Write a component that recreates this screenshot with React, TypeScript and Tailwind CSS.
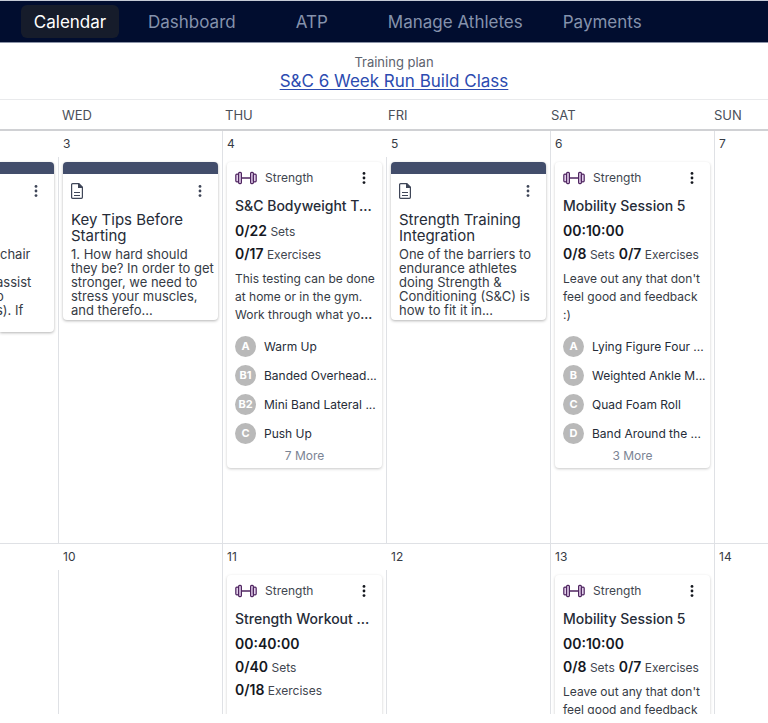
import type { ReactNode } from 'react'

type Exercise = { tag: string; name: string }

type Workout = {
  kind: 'workout'
  title: string
  stats: { value: string; label?: string }[][]
  description?: string
  cut?: boolean
  exercises?: Exercise[]
  more?: string
}

type Note = { kind: 'note'; title: string; body: string[] }

type Day = { date: string; openHead?: boolean; item?: Workout | Note }

const nav = [
  { label: 'Calendar', style: 'ml-[21px] w-[98px] rounded-md bg-[#161c2b] text-white' },
  { label: 'Dashboard', style: 'ml-[29px] text-[#8592ac]' },
  { label: 'ATP', style: 'ml-[60px] text-[#8592ac]' },
  { label: 'Manage Athletes', style: 'ml-[60px] text-[#8592ac]' },
  { label: 'Payments', style: 'ml-10 text-[#8592ac]' },
]

const weekdays = ['', 'WED', 'THU', 'FRI', 'SAT', 'SUN']

const mobility: Workout = {
  kind: 'workout',
  title: 'Mobility Session 5',
  stats: [
    [{ value: '00:10:00' }],
    [
      { value: '0/8', label: 'Sets' },
      { value: '0/7', label: 'Exercises' },
    ],
  ],
  description: "Leave out any that don't feel good and feedback :)",
  exercises: [
    { tag: 'A', name: 'Lying Figure Four ...' },
    { tag: 'B', name: 'Weighted Ankle M...' },
    { tag: 'C', name: 'Quad Foam Roll' },
    { tag: 'D', name: 'Band Around the ...' },
  ],
  more: '3 More',
}

const firstWeek: Day[] = [
  {
    date: '3',
    openHead: true,
    item: {
      kind: 'note',
      title: 'Key Tips Before Starting',
      body: ['1. How hard should', 'they be? In order to get', 'stronger, we need to', 'stress your muscles,', 'and therefo...'],
    },
  },
  {
    date: '4',
    item: {
      kind: 'workout',
      title: 'S&C Bodyweight T...',
      stats: [[{ value: '0/22', label: 'Sets' }], [{ value: '0/17', label: 'Exercises' }]],
      description: 'This testing can be done at home or in the gym. Work through what yo',
      cut: true,
      exercises: [
        { tag: 'A', name: 'Warm Up' },
        { tag: 'B1', name: 'Banded Overhead...' },
        { tag: 'B2', name: 'Mini Band Lateral ...' },
        { tag: 'C', name: 'Push Up' },
      ],
      more: '7 More',
    },
  },
  {
    date: '5',
    openHead: true,
    item: {
      kind: 'note',
      title: 'Strength Training Integration',
      body: ['One of the barriers to', 'endurance athletes', 'doing Strength &', 'Conditioning (S&C) is', 'how to fit it in...'],
    },
  },
  { date: '6', item: mobility },
  { date: '7' },
]

const secondWeek: Day[] = [
  { date: '10', openHead: true },
  {
    date: '11',
    item: {
      kind: 'workout',
      title: 'Strength Workout ...',
      stats: [[{ value: '00:40:00' }], [{ value: '0/40', label: 'Sets' }], [{ value: '0/18', label: 'Exercises' }]],
    },
  },
  { date: '12', openHead: true },
  // only the top of this card fits above the fold
  { date: '13', item: { ...mobility, exercises: undefined, more: undefined } },
  { date: '14' },
]

function Dumbbell () {
  return (
    <svg width="22" height="14" viewBox="0 0 22 14" fill="#e3d0ec" stroke="#4f2560" strokeWidth="1.2" aria-hidden="true">
      <path d="M6.6 7h8.8" strokeWidth="1.5" />
      <rect x="0.8" y="3.2" width="2.8" height="7.6" rx="1" />
      <rect x="3.6" y="1.4" width="2.8" height="11.2" rx="1" />
      <rect x="15.6" y="1.4" width="2.8" height="11.2" rx="1" />
      <rect x="18.4" y="3.2" width="2.8" height="7.6" rx="1" />
    </svg>
  )
}

function NoteIcon () {
  return (
    <svg width="12" height="16" viewBox="0 0 12 16" fill="none" stroke="#3f4658" strokeWidth="1.2" aria-hidden="true">
      <path d="M1.6.7h6.2l3.6 3.6v10q0 1-1 1H1.6q-1 0-1-1V1.7q0-1 1-1z" />
      <path d="M7.6.8v3.7h3.7z" fill="#3f4658" />
      <path d="M3 9.5h6M3 12.5h6" strokeWidth="1" />
    </svg>
  )
}

function MenuButton ({ color }: { color: string }) {
  return (
    <button type="button" aria-label="Options" className={`flex h-4 w-4 items-center justify-center ${color}`}>
      <svg width="4" height="14" viewBox="0 0 4 14" fill="currentColor" aria-hidden="true">
        <circle cx="2" cy="2.4" r="1.4" />
        <circle cx="2" cy="7" r="1.4" />
        <circle cx="2" cy="11.6" r="1.4" />
      </svg>
    </button>
  )
}

function NoteCard ({ item }: { item: Note }) {
  return (
    <article className="overflow-hidden rounded bg-white pb-[3px] shadow-[0_1px_3px_rgba(0,0,0,0.3)]">
      <div className="h-3 bg-[#424d6b]" />
      <div className="flex items-center justify-between pt-[9px] pr-[10px] pl-2">
        <NoteIcon />
        <MenuButton color="text-[#3f4658]" />
      </div>
      <h3 className="mt-[13px] px-2 text-[15px] leading-4 text-[#262c38]">{item.title}</h3>
      <p className="mt-[3px] pl-2 text-[13px] leading-[14px] whitespace-nowrap text-[#363b45]">
        {item.body.map((line) => <span key={line} className="block">{line}</span>)}
      </p>
    </article>
  )
}

function WorkoutCard ({ item }: { item: Workout }) {
  return (
    <article className="min-h-[306px] rounded bg-white px-2 pb-[3px] shadow-[0_1px_3px_rgba(0,0,0,0.22)]">
      <div className="flex h-8 items-center">
        <Dumbbell />
        <span className="ml-2 flex-1 text-[12px] text-[#41464f]">Strength</span>
        <div className="mr-[2px]"><MenuButton color="text-[#15181f]" /></div>
      </div>
      <h3 className="mb-px h-6 text-[14px] leading-6 font-medium whitespace-nowrap text-[#262c38]">{item.title}</h3>
      {item.stats.map((row) => (
        <div key={row[0].value} className="flex h-[23px] items-center gap-1 whitespace-nowrap">
          {row.map((stat) => (
            <span key={stat.value} className="text-[12px] text-[#41464f]">
              <b className="text-[14px] font-semibold text-[#15181f]">{stat.value}</b> {stat.label}
            </span>
          ))}
        </div>
      ))}
      {item.description && (
        <p className="mt-[5px] -mr-1 text-[12px] leading-[18px] text-[#363b45]">
          {item.description}{item.cut && <b>...</b>}
        </p>
      )}
      {item.exercises && (
        <ul className="mt-2">
          {item.exercises.map((exercise) => (
            <li key={exercise.tag} className="flex h-[29px] items-center gap-2 text-[12px] whitespace-nowrap text-[#262c38]">
              <span className="flex size-[21px] shrink-0 items-center justify-center rounded-full bg-[#b9b9b9] text-[11px] font-bold text-white">
                {exercise.tag}
              </span>
              {exercise.name}
            </li>
          ))}
        </ul>
      )}
      {item.more && (
        <button type="button" className="block h-4 w-full text-center text-[12px] leading-4 text-[#7b8494]">{item.more}</button>
      )}
    </article>
  )
}

function DayCell ({ day }: { day: Day }) {
  return (
    <section className="flex min-w-0 flex-col">
      <h2 className={`h-[26px] border-l pl-1 text-[12px] leading-[26px] text-[#363b45] ${day.openHead ? 'border-transparent' : 'border-[#dfe1e5]'}`}>
        {day.date}
      </h2>
      <div className="flex-1 border-l border-[#dfe1e5] px-1 pt-[5px]">
        {day.item?.kind === 'note' && <NoteCard item={day.item} />}
        {day.item?.kind === 'workout' && <WorkoutCard item={day.item} />}
      </div>
    </section>
  )
}

function Week ({ days, children }: { days: Day[]; children?: ReactNode }) {
  return (
    <div className="grid min-h-[413px] shrink-0 grid-cols-[58px_repeat(4,minmax(0,1fr))_54px] border-b border-[#dfe1e5]">
      <div className="min-w-0 overflow-hidden">{children}</div>
      {days.map((day) => <DayCell key={day.date} day={day} />)}
    </div>
  )
}

export default function App () {
  return (
    <div className="flex h-screen flex-col overflow-hidden bg-white pb-[9px] font-[Inter,sans-serif]">
      <nav className="flex h-[43px] shrink-0 items-center border-y border-t-[#c5cad6] border-b-[#8b93a7] bg-[#010d2f] text-[17px] whitespace-nowrap">
        {nav.map((link) => (
          <a key={link.label} href="#" className={`flex h-[33px] items-center justify-center pt-[2px] ${link.style}`}>{link.label}</a>
        ))}
      </nav>

      <header className="flex h-[57px] shrink-0 flex-col items-center border-b border-[#e9eaec] pt-[10px] pl-5">
        <p className="text-[13px] leading-[18px] text-[#5d636e]">Training plan</p>
        <a href="#" className="text-[17px] leading-5 text-[#2c4bb0] underline underline-offset-2">S&amp;C 6 Week Run Build Class</a>
      </header>

      <div className="grid h-[31px] shrink-0 grid-cols-[62px_repeat(4,minmax(0,1fr))_54px] border-b-2 border-[#d0d1d4] text-[13px] leading-[30px] text-[#4a4f59]">
        {weekdays.map((day) => <span key={day}>{day}</span>)}
      </div>

      <main className="flex min-h-0 flex-1 flex-col overflow-hidden">
        <Week days={firstWeek}>
          <article className="mt-[31px] mr-1 mb-1 h-[170px] overflow-hidden rounded-r bg-white shadow-[0_1px_3px_rgba(0,0,0,0.3)]">
            <div className="h-3 bg-[#424d6b]" />
            <div className="flex justify-end pt-[9px] pr-[10px]">
              <MenuButton color="text-[#3f4658]" />
            </div>
            <p className="mt-12 text-[13px] leading-[14px] whitespace-nowrap text-[#363b45]">
              <span className="block">chair</span>
              <span className="mt-[14px] -ml-1 block">assist</span>
              <span className="-ml-1 block">o</span>
              <span className="-ml-1 block">s). If</span>
            </p>
          </article>
        </Week>
        <Week days={secondWeek} />
      </main>
    </div>
  )
}
